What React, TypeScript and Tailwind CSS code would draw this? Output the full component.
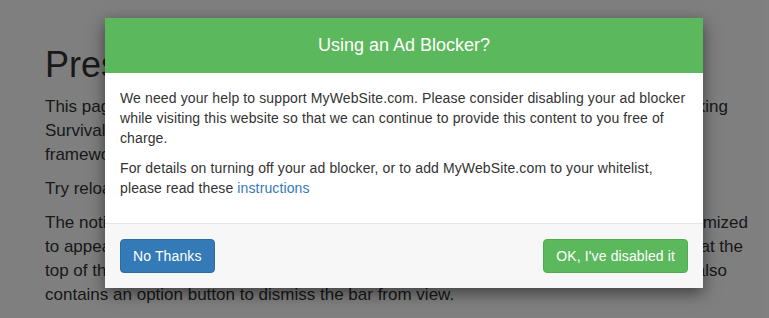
import React from "react";

const font = { fontFamily: '"Liberation Sans", Arial, sans-serif' };

function Line({ left, right, w }: { left: string; right?: string; w: string }) {
  return (
    <div className={`flex justify-between whitespace-nowrap ${w}`}>
      <span>{left}</span>
      {right ? <span>{right}</span> : null}
    </div>
  );
}

export default function App() {
  return (
    <div className="relative w-[769px] h-[318px] overflow-hidden bg-white" style={font}>
      {/* page content */}
      <div className="pl-[45px] pt-[45px] text-[#333] text-[17px] leading-[24px]">
        <h1 className="text-[36px] leading-[40px] mb-[10px]">Press the button</h1>
        <div className="mb-[10px]">
          <Line w="w-[683px]" left="This page demonstrates an ad blocker notice" right="king" />
          <Line w="w-[683px]" left="Survival kit script and the Bootstrap" />
          <Line w="w-[683px]" left="framework." />
        </div>
        <div className="mb-[10px]">
          <Line w="w-[683px]" left="Try reloading the page with your ad blocker enabled." />
        </div>
        <div>
          <Line w="w-[703px]" left="The notice can be displayed as a modal or" right="mized" />
          <Line w="w-[698px]" left="to appear as a notification bar fixed" right="at the" />
          <Line w="w-[682px]" left="top of the window. The bar" right="also" />
          <Line w="w-[682px]" left="contains an option button to dismiss the bar from view." />
        </div>
      </div>

      {/* backdrop */}
      <div className="absolute inset-0 bg-black/50" />

      {/* modal */}
      <div className="absolute left-[105px] top-[18px] w-[598px] bg-white shadow-[0_5px_15px_rgba(0,0,0,0.5)]">
        <div className="h-[55px] bg-[#5cb85c] flex items-center justify-center text-white text-[18px]">
          Using an Ad Blocker?
        </div>
        <div className="p-[15px] text-[14px] leading-[20px] text-[#333] tracking-[0.12px]">
          <p className="mb-[10px]">
            We need your help to support MyWebSite.com. Please consider disabling your ad blocker while visiting this
            website so that we can continue to provide this content to you free of charge.
          </p>
          <p className="mb-[10px]">
            For details on turning off your ad blocker, or to add MyWebSite.com to your whitelist, please read these{" "}
            <a className="text-[#337ab7]">instructions</a>
          </p>
        </div>
        <div className="border-t border-[#e5e5e5] bg-[#f7f7f7] p-[15px] flex justify-between">
          <button className="h-[34px] px-[12px] rounded-[4px] border border-[#2e6da4] bg-[#337ab7] text-white text-[14px] leading-[20px] tracking-[0.12px]">
            No Thanks
          </button>
          <button className="h-[34px] px-[12px] rounded-[4px] border border-[#4cae4c] bg-[#5cb85c] text-white text-[14px] leading-[20px] tracking-[0.12px]">
            OK, I've disabled it
          </button>
        </div>
      </div>
    </div>
  );
}
